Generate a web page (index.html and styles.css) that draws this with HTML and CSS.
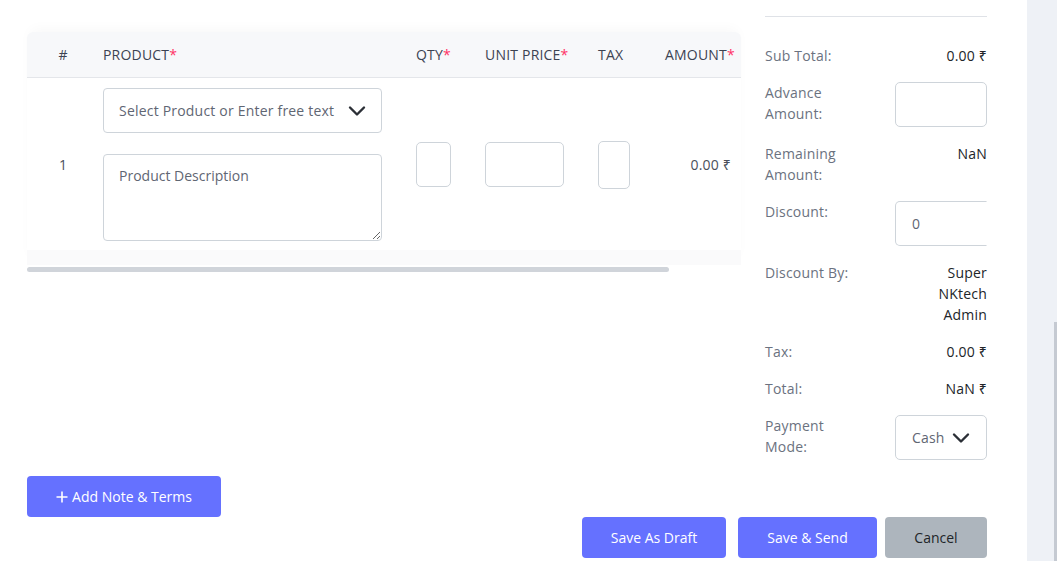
FILE: index.html
```html
<!DOCTYPE html>
<html lang="en">
<head>
<meta charset="utf-8">
<title>Invoice items</title>
<link rel="stylesheet" href="styles.css">
</head>
<body>
<div class="page">
  <main class="main">
    <div class="content">
      <section class="left">
        <div class="table-wrap">
          <div class="grid thead">
            <div class="c-num">#</div>
            <div>PRODUCT<span class="req">*</span></div>
            <div>QTY<span class="req">*</span></div>
            <div>UNIT PRICE<span class="req">*</span></div>
            <div>TAX</div>
            <div>AMOUNT<span class="req">*</span></div>
          </div>
          <div class="grid trow">
            <div class="c-num">1</div>
            <div class="c-product">
              <div class="select">
                <span class="select-text">Select Product or Enter free text</span>
                <svg class="chev" width="18" height="12" viewBox="0 0 18 12"><path d="M2 2.5 L9 9.5 L16 2.5" fill="none" stroke="#2b2f36" stroke-width="2.4" stroke-linecap="round" stroke-linejoin="round"/></svg>
              </div>
              <textarea class="desc" placeholder="Product Description"></textarea>
            </div>
            <div><input class="inp qty" type="text"></div>
            <div><input class="inp price" type="text"></div>
            <div><input class="inp tax" type="text"></div>
            <div class="c-amount">0.00 ₹</div>
          </div>
          <div class="band"></div>
        </div>
        <div class="hscroll"><div class="thumb"></div></div>
      </section>
      <aside class="right">
        <div class="sum-row single">
          <div class="lbl">Sub Total:</div>
          <div class="val">0.00 ₹</div>
        </div>
        <div class="sum-row">
          <div class="lbl">Advance Amount:</div>
          <div class="val"><input class="box" type="text"></div>
        </div>
        <div class="sum-row">
          <div class="lbl">Remaining Amount:</div>
          <div class="val">NaN</div>
        </div>
        <div class="sum-row">
          <div class="lbl">Discount:</div>
          <div class="val"><input class="box clipped" type="text" value="0"></div>
        </div>
        <div class="sum-row">
          <div class="lbl">Discount By:</div>
          <div class="val"><span class="narrow">Super NKtech Admin</span></div>
        </div>
        <div class="sum-row">
          <div class="lbl">Tax:</div>
          <div class="val">0.00 ₹</div>
        </div>
        <div class="sum-row">
          <div class="lbl">Total:</div>
          <div class="val">NaN ₹</div>
        </div>
        <div class="sum-row">
          <div class="lbl">Payment Mode:</div>
          <div class="val">
            <div class="box pay">
              <span class="pay-text">Cash</span>
              <svg class="chev" width="18" height="12" viewBox="0 0 18 12"><path d="M2 2.5 L9 9.5 L16 2.5" fill="none" stroke="#2b2f36" stroke-width="2.4" stroke-linecap="round" stroke-linejoin="round"/></svg>
            </div>
          </div>
        </div>
      </aside>
    </div>
    <div class="note-row">
      <button class="btn primary note">
        <svg width="12" height="12" viewBox="0 0 12 12"><path d="M6 0.5 V11.5 M0.5 6 H11.5" stroke="#fff" stroke-width="1.6"/></svg>
        Add Note &amp; Terms
      </button>
    </div>
    <div class="actions">
      <button class="btn primary draft">Save As Draft</button>
      <button class="btn primary send">Save &amp; Send</button>
      <button class="btn cancel">Cancel</button>
    </div>
  </main>
  <div class="strip"><div class="vthumb"></div></div>
</div>
</body>
</html>
```

FILE: styles.css
```css
* { box-sizing: border-box; }
html, body { margin: 0; padding: 0; }
body {
  font-family: "Open Sans", "Noto Sans", sans-serif;
  font-size: 14px;
  letter-spacing: 0.2px;
  color: #212529;
  background: #eef1f6;
}
.page {
  display: flex;
  width: 1057px;
  height: 561px;
  overflow: hidden;
}
.main {
  width: 1027px;
  background: #fff;
  padding: 0 40px 0 27px;
  display: flex;
  flex-direction: column;
}
.content {
  display: flex;
  gap: 24px;
}
.left {
  width: 714px;
  padding-top: 32px;
}
.table-wrap {
  border-radius: 6px 6px 0 0;
  box-shadow: 0 -6px 14px -4px rgba(0, 0, 0, 0.035);
}
.grid {
  display: grid;
  grid-template-columns: 76px 313px 69px 113px 67px 76px;
  align-items: center;
}
.thead {
  height: 46px;
  background: #f7f8fa;
  border-bottom: 1px solid #e4e6ea;
  border-radius: 6px 6px 0 0;
  color: #3c4352;
  font-size: 14px;
  padding-bottom: 1px;
}
.req { color: #ff3366; }
.c-num { text-align: center; padding-right: 4px; }
.trow {
  padding: 10px 0 9px;
  color: #4a505b;
}
.c-product {
  display: flex;
  flex-direction: column;
  gap: 21px;
  width: 279px;
}
.select {
  height: 45px;
  border: 1px solid #ced4da;
  border-radius: 4px;
  display: flex;
  align-items: center;
  justify-content: space-between;
  padding: 0 15px 0 15px;
  color: #5f6673;
}
.select .chev { flex: none; }
.desc {
  display: block;
  width: 279px;
  height: 87px;
  border: 1px solid #ced4da;
  border-radius: 4px;
  padding: 11px 15px;
  font: inherit;
  color: #5f6673;
}
.desc::placeholder { color: #5f6673; }
.inp {
  display: block;
  height: 45px;
  border: 1px solid #ced4da;
  border-radius: 5px;
  background: #fff;
  font: inherit;
}
.qty { width: 35px; }
.price { width: 79px; }
.tax { width: 32px; height: 48px; }
.c-amount {
  text-align: right;
  padding-right: 10px;
  color: #4a505b;
}
.band {
  height: 15px;
  background: #fafafb;
}
.hscroll {
  margin-top: 2px;
  height: 5px;
}
.hscroll .thumb {
  width: 642px;
  height: 5px;
  background: #d0d4da;
  border-radius: 3px;
}
.right {
  width: 222px;
  margin-top: 16px;
  border-top: 1px solid #dfe2e7;
  padding-top: 28px;
  display: flex;
  flex-direction: column;
  gap: 16px;
}
.sum-row {
  display: flex;
  justify-content: space-between;
  align-items: flex-start;
  line-height: 21px;
}
.lbl {
  width: 96px;
  color: #6b7280;
}
.val {
  text-align: right;
  color: #212529;
}
.narrow {
  display: inline-block;
  width: min-content;
}
.box {
  display: block;
  width: 92px;
  height: 45px;
  border: 1px solid #ced4da;
  border-radius: 5px;
  background: #fff;
  font: inherit;
  padding: 0 16px;
  color: #5f6673;
}
.clipped {
  border-right-color: transparent;
  border-radius: 5px 0 0 5px;
}
.pay {
  display: flex;
  align-items: center;
  justify-content: space-between;
  padding: 0 16px 0 16px;
}
.pay-text {
  white-space: nowrap;
  text-align: left;
  color: #5f6673;
}
.note-row {
  margin-top: 16px;
}
.btn {
  font: inherit;
  font-size: 14px;
  height: 41px;
  border: none;
  border-radius: 4px;
  cursor: pointer;
}
.primary {
  background: #6571ff;
  color: #fff;
}
.note {
  width: 194px;
  display: inline-flex;
  align-items: center;
  justify-content: center;
  gap: 4px;
}
.actions {
  display: flex;
  justify-content: flex-end;
  gap: 12px;
}
.draft { width: 144px; }
.send { width: 139px; }
.cancel {
  width: 102px;
  background: #adb5bd;
  color: #212529;
  margin-left: -4px;
}
.strip {
  flex: 1;
  display: flex;
  justify-content: flex-end;
}
.vthumb {
  width: 3px;
  margin-top: 322px;
  height: 239px;
  background: #c5cad2;
}
```
